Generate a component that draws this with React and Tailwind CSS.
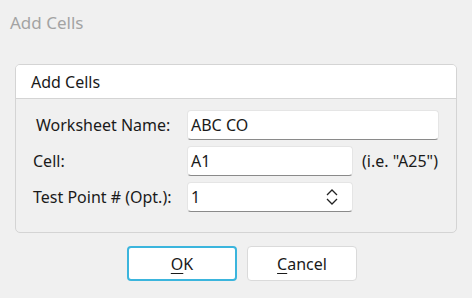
import React from 'react';

const Spinner = () => (
  <svg width="14" height="18" viewBox="0 0 14 18" fill="none" stroke="#222" strokeWidth="1.3">
    <path d="M2 7 L7 2 L12 7" />
    <path d="M2 11 L7 16 L12 11" />
  </svg>
);

const inputCls =
  'h-[30px] bg-white rounded-[4px] border border-[#e5e5e5] border-b-[#8a8a8a] pl-[3px] flex items-center text-[16px] text-[#1a1a1a]';

const App = () => {
  return (
    <div
      className="w-[472px] h-[298px] bg-[#f0f0f0] flex flex-col text-[#1a1a1a]"
      style={{ fontFamily: '"Noto Sans", "Open Sans", sans-serif' }}
    >
      <div className="h-[64px] pl-[10px] pt-[10px] text-[17px] text-[#a3a3a3]">Add Cells</div>

      <div className="ml-[15px] w-[442px] h-[169px] border border-[#d4d4d4] rounded-[5px] overflow-hidden">
        <div className="h-[34px] bg-white border-b border-[#d4d4d4] pl-[15px] flex items-center text-[16px]">
          Add Cells
        </div>
        <div className="pt-[11px] pl-[17px] grid grid-cols-[154px_auto] gap-y-[6px] items-center">
          <div className="text-[16px] pl-[3px]">Worksheet Name:</div>
          <div className={`${inputCls} w-[252px]`}>ABC CO</div>

          <div className="text-[16px]">Cell:</div>
          <div className="flex items-center">
            <div className={`${inputCls} w-[166px]`}>A1</div>
            <span className="ml-[9px] text-[16px]">(i.e. "A25")</span>
          </div>

          <div className="text-[16px]">Test Point # (Opt.):</div>
          <div className={`${inputCls} w-[166px] justify-between pr-[13px]`}>
            <span>1</span>
            <Spinner />
          </div>
        </div>
      </div>

      <div className="mt-[13px] flex justify-start pl-[127px] gap-[10px]">
        <button className="w-[110px] h-[35px] bg-white rounded-[4px] border-2 border-[#3bb5dd] text-[16px]">
          <span className="underline underline-offset-[3px]">O</span>K
        </button>
        <button className="w-[110px] h-[35px] bg-white rounded-[4px] border border-[#dadada] text-[16px]">
          <span className="underline underline-offset-[3px]">C</span>ancel
        </button>
      </div>
    </div>
  );
};

export default App;
